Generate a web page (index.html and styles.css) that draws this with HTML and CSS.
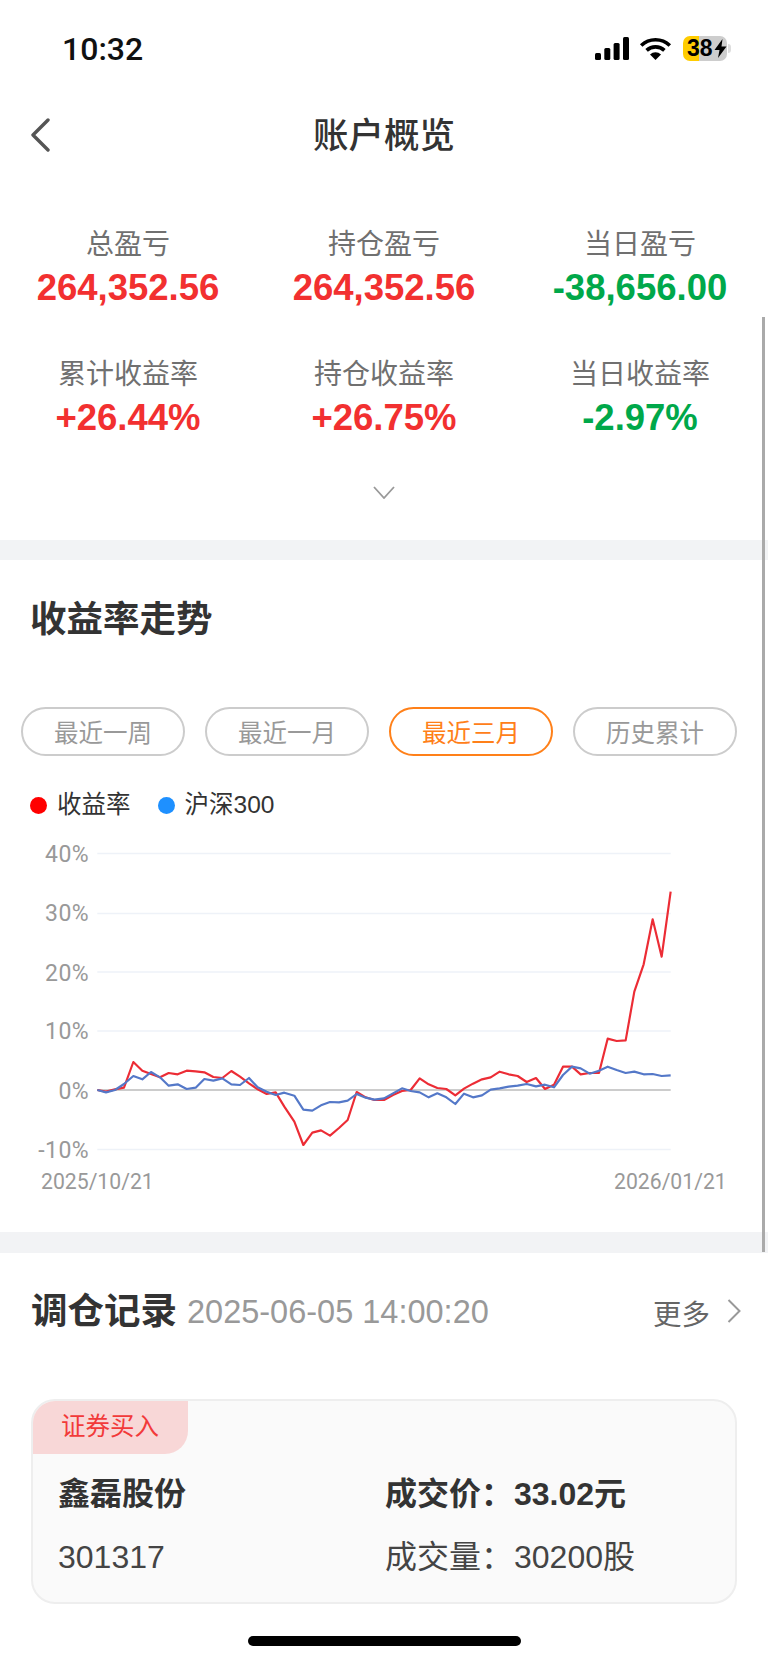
FILE: index.html
```html
<!DOCTYPE html>
<html lang="zh-CN">
<head>
  <meta charset="UTF-8" />
  <meta name="viewport" content="width=device-width, initial-scale=1.0"/>
  <title>账户概览</title>
  <link rel="stylesheet" href="styles.css">
</head>
<body>

<div class="status-bar">
  <span class="time">10:32</span>
  <div class="status-icons">
    <svg class="signal" width="34" height="23" viewBox="0 0 34 23">
      <rect x="0" y="16" width="6" height="7" rx="1.5"/>
      <rect x="9.3" y="11" width="6" height="12" rx="1.5"/>
      <rect x="18.6" y="6" width="6" height="17" rx="1.5"/>
      <rect x="28" y="0" width="6" height="23" rx="1.5"/>
    </svg>
    <svg class="wifi" width="33" height="23" viewBox="0 0 33 23">
      <path d="M2.2 8.5A20.5 20.5 0 0 1 30.8 8.5" fill="none" stroke="#000" stroke-width="3.6"/>
      <path d="M7.6 13.4A13 13 0 0 1 25.4 13.4" fill="none" stroke="#000" stroke-width="3.6"/>
      <path d="M16.5 23L11 17.4A8 8 0 0 1 22 17.4Z"/>
    </svg>
    <div class="battery">
      <span>38</span>
      <svg width="13" height="19" viewBox="0 0 13 19"><path d="M8.5 0L0.5 11H5.5L4 19L12.5 7.5H7.5Z"/></svg>
    </div>
    <div class="battery-nub"></div>
  </div>
</div>

<header class="nav">
  <svg class="back" width="20" height="34" viewBox="0 0 20 34"><path d="M18 2L3 17L18 32" fill="none" stroke="#555" stroke-width="3.4" stroke-linecap="round" stroke-linejoin="round"/></svg>
  <h1>账户概览</h1>
</header>

<section class="stats">
  <div class="stats-grid">
    <div class="stat"><p class="stat-label">总盈亏</p><p class="stat-value up">264,352.56</p></div>
    <div class="stat"><p class="stat-label">持仓盈亏</p><p class="stat-value up">264,352.56</p></div>
    <div class="stat"><p class="stat-label">当日盈亏</p><p class="stat-value down">-38,656.00</p></div>
    <div class="stat"><p class="stat-label">累计收益率</p><p class="stat-value up">+26.44%</p></div>
    <div class="stat"><p class="stat-label">持仓收益率</p><p class="stat-value up">+26.75%</p></div>
    <div class="stat"><p class="stat-label">当日收益率</p><p class="stat-value down">-2.97%</p></div>
  </div>
  <svg class="expand" width="22" height="13" viewBox="0 0 22 13"><path d="M1 1L11 12L21 1" fill="none" stroke="#999" stroke-width="1.8"/></svg>
</section>

<div class="band"></div>

<section class="trend">
  <h2 class="section-title">收益率走势</h2>
  <div class="pills">
    <span class="pill">最近一周</span>
    <span class="pill">最近一月</span>
    <span class="pill active">最近三月</span>
    <span class="pill">历史累计</span>
  </div>
  <div class="legend">
    <span class="legend-item"><i class="dot dot-red"></i>收益率</span>
    <span class="legend-item"><i class="dot dot-blue"></i>沪深300</span>
  </div>
  <svg class="chart" width="768" height="372" viewBox="0 0 768 372">
    <g class="grid">
      <line x1="97.3" x2="670.7" y1="23.5" y2="23.5"/>
      <line x1="97.3" x2="670.7" y1="83.5" y2="83.5"/>
      <line x1="97.3" x2="670.7" y1="142" y2="142"/>
      <line x1="97.3" x2="670.7" y1="201" y2="201"/>
      <line x1="97.3" x2="670.7" y1="319.5" y2="319.5"/>
    </g>
    <line class="zero" x1="97.3" x2="670.7" y1="260" y2="260"/>
    <g class="axis">
      <text x="89" y="32">40%</text>
      <text x="89" y="91">30%</text>
      <text x="89" y="151">20%</text>
      <text x="89" y="209">10%</text>
      <text x="89" y="269">0%</text>
      <text x="89" y="328">-10%</text>
    </g>
    <text class="date" x="41" y="359">2025/10/21</text>
    <text class="date" x="614" y="359">2026/01/21</text>
    <g transform="scale(0.33333)">
      <polyline class="line-red" points="292,780 318,785 345,778 372,773 400,696 427,722 453,732 480,742 506,729 533,733 560,722 587,724 613,727 640,741 667,744 694,723 720,740 747,760 773,778 800,792 827,787 853,830 883,875 910,945 937,908 963,901 990,917 1017,894 1043,870 1070,786 1097,802 1123,810 1152,810 1179,795 1206,783 1232,780 1259,745 1286,763 1312,774 1339,777 1366,796 1392,776 1419,761 1446,748 1472,742 1499,725 1526,733 1553,738 1580,756 1608,744 1635,777 1662,764 1689,710 1716,710 1742,733 1769,729 1797,729 1823,626 1850,633 1877,631 1903,485 1931,403 1958,268 1985,380 2012,185"/>
      <polyline class="line-blue" points="292,780 318,787 345,780 372,762 400,738 427,748 453,726 480,742 506,767 533,763 560,777 587,773 613,747 640,752 667,745 694,763 720,765 747,744 773,772 800,785 827,795 853,788 883,797 910,839 937,842 963,826 990,816 1017,817 1043,812 1070,792 1097,803 1123,809 1152,805 1179,790 1206,775 1232,783 1259,787 1286,802 1312,790 1339,802 1366,822 1392,791 1419,802 1446,796 1472,779 1499,775 1526,770 1553,767 1580,762 1608,769 1635,764 1662,772 1689,735 1716,710 1742,715 1769,731 1797,722 1823,710 1850,720 1877,729 1903,725 1931,733 1958,732 1985,738 2012,736"/>
    </g>
  </svg>
</section>

<div class="band band-2"></div>

<section class="records">
  <div class="records-head">
    <h2 class="section-title">调仓记录</h2>
    <span class="records-time">2025-06-05 14:00:20</span>
    <span class="more">更多</span>
    <svg class="more-arrow" width="14" height="24" viewBox="0 0 14 24"><path d="M1.5 1L12.5 12L1.5 23" fill="none" stroke="#999" stroke-width="2"/></svg>
  </div>
  <div class="record-card">
    <div class="record-tag">证券买入</div>
    <div class="record-body">
      <div class="record-name">鑫磊股份</div>
      <div class="record-field strong"><span class="field-label">成交价：</span>33.02元</div>
      <div class="record-code">301317</div>
      <div class="record-field"><span class="field-label">成交量：</span>30200股</div>
    </div>
  </div>
</section>

<div class="scrollbar"></div>
<div class="home-indicator"></div>

</body>
</html>
```

FILE: styles.css
```css
* {
  box-sizing: border-box;
}
body {
  margin: 0;
  width: 768px;
  height: 1663px;
  position: relative;
  overflow: hidden;
  background: #fff;
  color: #333;
  font-family: "Liberation Sans", "Noto Sans CJK SC", sans-serif;
}
h1, h2, p {
  margin: 0;
}

/* status bar */
.status-bar {
  height: 96px;
  padding: 1px 37px 0 62px;
  display: flex;
  justify-content: space-between;
  align-items: center;
}
.time {
  font-family: Roboto, sans-serif;
  font-size: 32px;
  font-weight: 500;
  color: #111;
}
.status-icons {
  display: flex;
  align-items: center;
}
.wifi {
  margin-left: 10px;
}
.battery {
  margin-left: 11px;
  width: 44px;
  height: 25px;
  padding-left: 4px;
  border-radius: 7px;
  background: linear-gradient(to right, #ffcc00 16px, #cdcdcd 16px);
  display: flex;
  align-items: center;
  font-size: 23px;
  font-weight: 700;
  line-height: 25px;
  color: #000;
}
.battery svg {
  margin-left: 1px;
}
.battery-nub {
  width: 3px;
  height: 9px;
  margin-left: 1px;
  border-radius: 0 3px 3px 0;
  background: #ddd;
}

/* nav */
.nav {
  height: 78px;
  padding-top: 2px;
  position: relative;
  display: flex;
  align-items: center;
  justify-content: center;
}
.nav h1 {
  font-size: 35.5px;
  font-weight: 500;
  line-height: 50px;
  color: #333;
}
.back {
  position: absolute;
  left: 30px;
  top: 22px;
}

/* account numbers */
.stats {
  height: 366px;
  padding-top: 51px;
  display: flex;
  flex-direction: column;
}
.stats-grid {
  display: grid;
  grid-template-columns: repeat(3, 256px);
  row-gap: 43px;
  text-align: center;
}
.stat-label {
  font-size: 28px;
  line-height: 39px;
  color: #707070;
}
.stat-value {
  font-size: 36.5px;
  font-weight: 700;
  line-height: 48px;
}
.up {
  color: #f23030;
}
.down {
  color: #00a84a;
}
.expand {
  margin: 44px 0 0 373px;
}

.band {
  height: 20px;
  background: #f2f3f5;
}
.band-2 {
  height: 21px;
}

/* trend */
.trend {
  height: 672px;
  padding-top: 35px;
}
.section-title {
  font-size: 36.5px;
  font-weight: 700;
  line-height: 50px;
  color: #333;
}
.trend .section-title {
  padding-left: 30px;
}
.pills {
  margin-top: 62px;
  padding-left: 21px;
  display: flex;
  gap: 20px;
}
.pill {
  width: 164px;
  height: 49px;
  border: 2px solid #ccc;
  border-radius: 25px;
  display: flex;
  align-items: center;
  justify-content: center;
  font-size: 24.5px;
  color: #999;
}
.pill.active {
  border-color: #ff8019;
  color: #ff8019;
}
.legend {
  margin-top: 34px;
  padding-left: 30px;
  display: flex;
  gap: 27px;
  font-size: 24.5px;
  line-height: 30px;
  color: #333;
}
.legend-item {
  display: flex;
  align-items: center;
  gap: 10px;
}
.dot {
  width: 17px;
  height: 17px;
  border-radius: 50%;
}
.dot-red {
  background: #ff0000;
}
.dot-blue {
  background: #1e90ff;
}
.chart {
  display: block;
  margin-top: 10px;
}
.grid line {
  stroke: #eef2f8;
  stroke-width: 1.5;
}
.zero {
  stroke: #bbb;
  stroke-width: 1.5;
}
.axis text {
  font-family: Roboto, sans-serif;
  font-size: 23px;
  letter-spacing: 0.4px;
  fill: #999;
  text-anchor: end;
}
.date {
  font-family: Roboto, sans-serif;
  font-size: 21.2px;
  fill: #999;
}
.line-red, .line-blue {
  fill: none;
  stroke-width: 6.5;
  stroke-linejoin: round;
}
.line-red {
  stroke: #ec2c35;
}
.line-blue {
  stroke: #5478c8;
}

/* records */
.records {
  padding: 34px 31px 0 31px;
}
.records-head {
  height: 50px;
  display: flex;
  align-items: center;
}
.records-time {
  margin-left: 10px;
  font-size: 32.5px;
  color: #999;
}
.more {
  margin-left: auto;
  font-size: 28.5px;
  color: #666;
}
.more-arrow {
  margin: 0 -4px 2px 17px;
}
.record-card {
  margin-top: 62px;
  height: 205px;
  border: 2px solid #eee;
  border-radius: 24px;
  background: #fafafa;
  overflow: hidden;
}
.record-tag {
  width: 155px;
  height: 53px;
  padding-left: 28px;
  background: #f8d7d7;
  border-bottom-right-radius: 23px;
  font-size: 24.5px;
  line-height: 52px;
  color: #f23a3a;
}
.record-body {
  margin-top: 18px;
  padding-left: 25px;
  display: grid;
  grid-template-columns: 327px 1fr;
  row-gap: 19px;
  font-size: 32px;
  line-height: 44px;
  color: #444;
}
.record-name, .record-field.strong {
  font-weight: 700;
  color: #333;
}
.field-label {
  display: inline-block;
  width: 129px;
}

.scrollbar {
  position: absolute;
  left: 762px;
  top: 317px;
  width: 2.5px;
  height: 935px;
  background: #aaa;
}
.home-indicator {
  position: absolute;
  left: 248px;
  top: 1636px;
  width: 273px;
  height: 10px;
  border-radius: 5px;
  background: #000;
}
```
